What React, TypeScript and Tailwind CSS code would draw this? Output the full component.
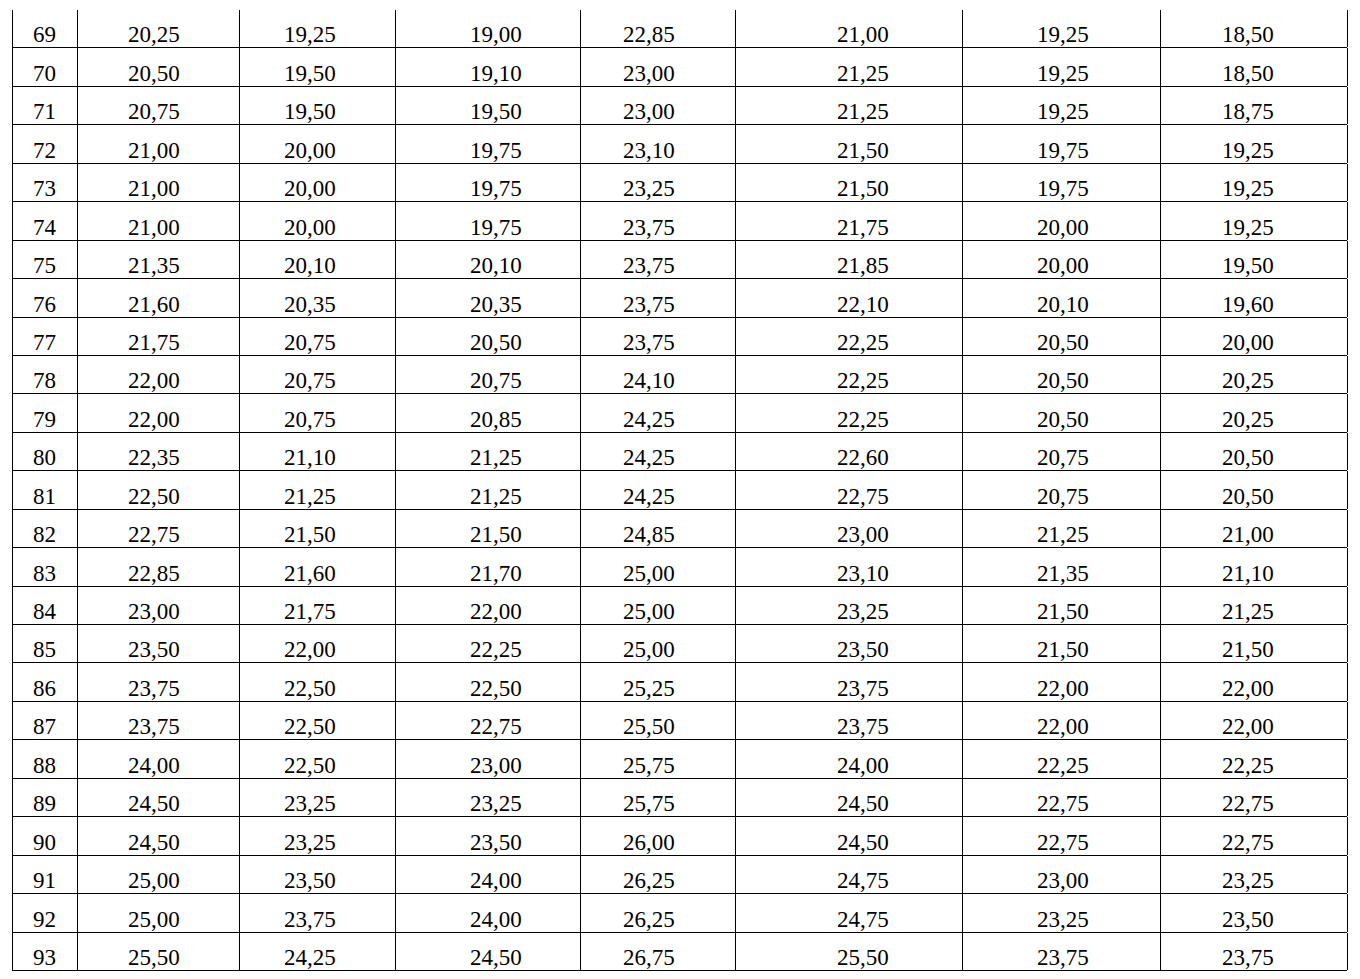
const rows: string[][] = [
  ['69', '20,25', '19,25', '19,00', '22,85', '21,00', '19,25', '18,50'],
  ['70', '20,50', '19,50', '19,10', '23,00', '21,25', '19,25', '18,50'],
  ['71', '20,75', '19,50', '19,50', '23,00', '21,25', '19,25', '18,75'],
  ['72', '21,00', '20,00', '19,75', '23,10', '21,50', '19,75', '19,25'],
  ['73', '21,00', '20,00', '19,75', '23,25', '21,50', '19,75', '19,25'],
  ['74', '21,00', '20,00', '19,75', '23,75', '21,75', '20,00', '19,25'],
  ['75', '21,35', '20,10', '20,10', '23,75', '21,85', '20,00', '19,50'],
  ['76', '21,60', '20,35', '20,35', '23,75', '22,10', '20,10', '19,60'],
  ['77', '21,75', '20,75', '20,50', '23,75', '22,25', '20,50', '20,00'],
  ['78', '22,00', '20,75', '20,75', '24,10', '22,25', '20,50', '20,25'],
  ['79', '22,00', '20,75', '20,85', '24,25', '22,25', '20,50', '20,25'],
  ['80', '22,35', '21,10', '21,25', '24,25', '22,60', '20,75', '20,50'],
  ['81', '22,50', '21,25', '21,25', '24,25', '22,75', '20,75', '20,50'],
  ['82', '22,75', '21,50', '21,50', '24,85', '23,00', '21,25', '21,00'],
  ['83', '22,85', '21,60', '21,70', '25,00', '23,10', '21,35', '21,10'],
  ['84', '23,00', '21,75', '22,00', '25,00', '23,25', '21,50', '21,25'],
  ['85', '23,50', '22,00', '22,25', '25,00', '23,50', '21,50', '21,50'],
  ['86', '23,75', '22,50', '22,50', '25,25', '23,75', '22,00', '22,00'],
  ['87', '23,75', '22,50', '22,75', '25,50', '23,75', '22,00', '22,00'],
  ['88', '24,00', '22,50', '23,00', '25,75', '24,00', '22,25', '22,25'],
  ['89', '24,50', '23,25', '23,25', '25,75', '24,50', '22,75', '22,75'],
  ['90', '24,50', '23,25', '23,50', '26,00', '24,50', '22,75', '22,75'],
  ['91', '25,00', '23,50', '24,00', '26,25', '24,75', '23,00', '23,25'],
  ['92', '25,00', '23,75', '24,00', '26,25', '24,75', '23,25', '23,50'],
  ['93', '25,50', '24,25', '24,50', '26,75', '25,50', '23,75', '23,75'],
];

// left padding per column, measured from the scan
const cellPad = ['pl-[20px]', 'pl-[50px]', 'pl-[44px]', 'pl-[74px]', 'pl-[42px]', 'pl-[101px]', 'pl-[74px]', 'pl-[61px]'];

export default function App() {
  return (
    <div className="min-h-screen bg-white pt-[10px] pl-[12px]">
      <div
        className="w-[1335px] border-l border-black text-black text-[23px] leading-none"
        style={{ fontFamily: '"Liberation Serif", "Times New Roman", serif' }}
      >
        {rows.map((row) => (
          <div
            key={row[0]}
            className="grid grid-cols-[65px_162px_156px_185px_155px_227px_198px_187px] h-[38.45px] border-b border-black"
          >
            {row.map((val, i) => (
              <div key={i} className={`flex items-end pb-[1px] border-r border-black ${cellPad[i]}`}>
                {val}
              </div>
            ))}
          </div>
        ))}
      </div>
    </div>
  );
}
